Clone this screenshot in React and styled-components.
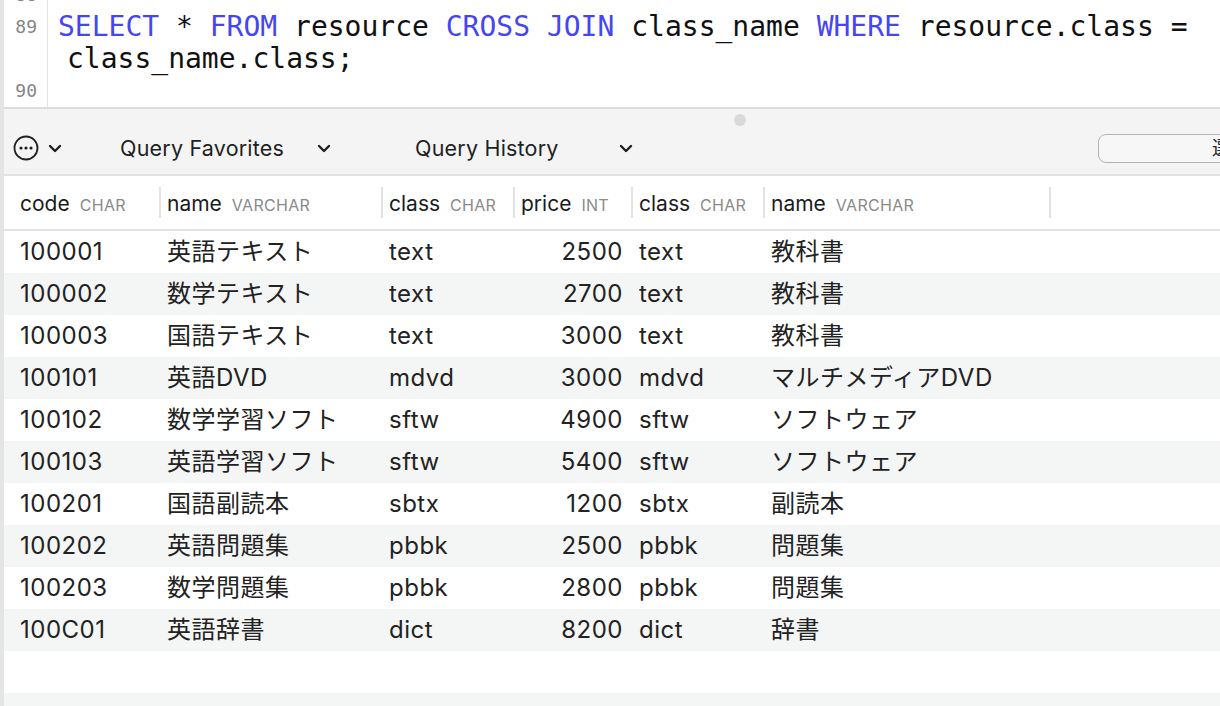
import React from 'react'
import styled, { createGlobalStyle } from 'styled-components'

const GlobalStyle = createGlobalStyle`
  html, body {
    margin: 0;
    padding: 0;
    background: #ffffff;
    overflow: hidden;
  }
  body {
    font-family: Inter, "Noto Sans CJK JP", sans-serif;
    color: #262626;
  }
`

const KEYWORDS = ['SELECT', 'FROM', 'CROSS', 'JOIN', 'WHERE']

const lines = [
  { no: 88, text: '' },
  { no: 89, text: 'SELECT * FROM resource CROSS JOIN class_name WHERE resource.class = class_name.class;' },
  { no: 90, text: '' },
]

const columns = [
  { name: 'code', type: 'CHAR', width: 156, first: true },
  { name: 'name', type: 'VARCHAR', width: 222 },
  { name: 'class', type: 'CHAR', width: 132 },
  { name: 'price', type: 'INT', width: 118, right: true },
  { name: 'class', type: 'CHAR', width: 132 },
  { name: 'name', type: 'VARCHAR', width: 286 },
]

const rows = [
  ['100001', '英語テキスト', 'text', '2500', 'text', '教科書'],
  ['100002', '数学テキスト', 'text', '2700', 'text', '教科書'],
  ['100003', '国語テキスト', 'text', '3000', 'text', '教科書'],
  ['100101', '英語DVD', 'mdvd', '3000', 'mdvd', 'マルチメディアDVD'],
  ['100102', '数学学習ソフト', 'sftw', '4900', 'sftw', 'ソフトウェア'],
  ['100103', '英語学習ソフト', 'sftw', '5400', 'sftw', 'ソフトウェア'],
  ['100201', '国語副読本', 'sbtx', '1200', 'sbtx', '副読本'],
  ['100202', '英語問題集', 'pbbk', '2500', 'pbbk', '問題集'],
  ['100203', '数学問題集', 'pbbk', '2800', 'pbbk', '問題集'],
  ['100C01', '英語辞書', 'dict', '8200', 'dict', '辞書'],
  null,
  null,
]

const gridColumns = columns.map((c) => `${c.width}px`).join(' ') + ' 1fr'

const Chevron = () => (
  <svg width="14" height="9" viewBox="0 0 14 9" fill="none">
    <path d="M2 2 L7 7 L12 2" stroke="#1f1f1f" strokeWidth="2.4" strokeLinecap="round" strokeLinejoin="round" />
  </svg>
)

const MoreIcon = () => (
  <svg width="26" height="26" viewBox="0 0 26 26" fill="none">
    <circle cx="13" cy="13" r="11.5" stroke="#1f1f1f" strokeWidth="1.8" />
    <circle cx="8" cy="13" r="1.6" fill="#1f1f1f" />
    <circle cx="13" cy="13" r="1.6" fill="#1f1f1f" />
    <circle cx="18" cy="13" r="1.6" fill="#1f1f1f" />
  </svg>
)

const renderCode = (text) =>
  text.split(/(\s+)/).map((part, i) =>
    KEYWORDS.includes(part) ? <Keyword key={i}>{part}</Keyword> : part
  )

const App = () => (
  <Shell>
    <GlobalStyle />
    <Editor>
      <Lines>
        {lines.map((line) => (
          <Line key={line.no}>
            <Gutter>{line.no}</Gutter>
            <Code>{line.text ? renderCode(line.text) : '\u00a0'}</Code>
          </Line>
        ))}
      </Lines>
    </Editor>

    <Toolbar>
      <Handle>
        <Dot />
      </Handle>
      <Bar>
        <IconMenu>
          <MoreIcon />
          <Chevron />
        </IconMenu>
        <Dropdown $width={211} $offset={58}>
          Query Favorites
          <Chevron />
        </Dropdown>
        <Dropdown $width={218} $offset={84}>
          Query History
          <Chevron />
        </Dropdown>
        <Search>選択範囲</Search>
      </Bar>
    </Toolbar>

    <Table>
      <HeaderRow>
        {columns.map((col, i) => (
          <HeaderCell key={i} $first={col.first}>
            {col.name}
            <TypeTag>{col.type}</TypeTag>
          </HeaderCell>
        ))}
        <HeaderCell $last />
      </HeaderRow>
      {rows.map((row, r) => (
        <Row key={r} $striped={r % 2 === 1}>
          {columns.map((col, c) => (
            <Cell key={c} $first={col.first} $right={col.right}>
              {row ? row[c] : ''}
            </Cell>
          ))}
          <Cell />
        </Row>
      ))}
    </Table>
  </Shell>
)

export default App

// ------- STYLES -------

const Shell = styled.div`
  width: 1220px;
  height: 706px;
  box-sizing: border-box;
  border-left: 4px solid #e4e4e4;
  overflow: hidden;
  display: flex;
  flex-direction: column;
`

// --- Editor
const Editor = styled.div`
  height: 107px;
  flex-shrink: 0;
  overflow: hidden;
  background: #ffffff;
  border-bottom: 2px solid #dcdcdc;
`

const Lines = styled.div`
  margin-top: -21px;
`

const Line = styled.div`
  display: flex;
  align-items: stretch;
`

const Gutter = styled.div`
  width: 33px;
  flex-shrink: 0;
  padding-right: 10px;
  border-right: 1px solid #e2e2e2;
  text-align: right;
  font-family: "DejaVu Sans Mono", monospace;
  font-size: 18px;
  line-height: 32px;
  color: #858585;
`

const Code = styled.div`
  flex: 1;
  padding-left: 19px;
  padding-right: 20px;
  text-indent: -9px;
  font-family: "DejaVu Sans Mono", monospace;
  font-size: 28px;
  line-height: 32px;
  color: #111111;
  white-space: pre-wrap;
`

const Keyword = styled.span`
  color: #4646f0;
`

// --- Toolbar
const Toolbar = styled.div`
  height: 65px;
  flex-shrink: 0;
  background: #f4f4f4;
  border-bottom: 2px solid #e2e2e2;
  display: flex;
  flex-direction: column;
`

const Handle = styled.div`
  height: 17px;
  display: flex;
  justify-content: center;
  align-items: flex-end;
`

const Dot = styled.div`
  width: 12px;
  height: 12px;
  border-radius: 50%;
  background: #d9d9d9;
  margin-left: 256px;
`

const Bar = styled.div`
  flex: 1;
  display: flex;
  align-items: center;
  padding-left: 9px;
  padding-bottom: 4px;
  white-space: nowrap;
`

const IconMenu = styled.div`
  display: flex;
  align-items: center;
  gap: 9px;
`

const Dropdown = styled.div`
  width: ${(p) => p.$width}px;
  margin-left: ${(p) => p.$offset}px;
  flex-shrink: 0;
  display: flex;
  align-items: center;
  justify-content: space-between;
  font-size: 21.5px;
  letter-spacing: 0.2px;
  color: #1f1f1f;
`

const Search = styled.div`
  flex-shrink: 0;
  margin-left: 465px;
  width: 220px;
  height: 29px;
  box-sizing: border-box;
  border: 1.5px solid #b4b4b4;
  border-radius: 8px;
  background: #f7f7f7;
  padding-left: 113px;
  font-size: 19px;
  line-height: 27px;
  color: #222222;
  overflow: hidden;
`

// --- Table
const Table = styled.div`
  flex: 1;
  background: #ffffff;
`

const HeaderRow = styled.div`
  display: grid;
  grid-template-columns: ${gridColumns};
  height: 53px;
  border-bottom: 2px solid #e3e3e3;
`

const HeaderCell = styled.div`
  position: relative;
  display: flex;
  align-items: center;
  gap: 10px;
  padding-left: ${(p) => (p.$first ? 16 : 7)}px;
  padding-top: 2px;
  font-size: 21px;
  color: #1c1c1c;
  white-space: nowrap;

  &::after {
    content: '';
    display: ${(p) => (p.$last ? 'none' : 'block')};
    position: absolute;
    right: -1px;
    top: 11px;
    bottom: 11px;
    width: 2px;
    background: #e3e3e3;
  }
`

const TypeTag = styled.span`
  font-size: 16px;
  letter-spacing: 0.3px;
  color: #8a8a8a;
  padding-top: 2px;
`

const Row = styled.div`
  display: grid;
  grid-template-columns: ${gridColumns};
  height: 42px;
  background: ${(p) => (p.$striped ? '#f4f5f5' : '#ffffff')};
`

const Cell = styled.div`
  padding-left: ${(p) => (p.$first ? 16 : 7)}px;
  padding-right: ${(p) => (p.$right ? 9 : 0)}px;
  text-align: ${(p) => (p.$right ? 'right' : 'left')};
  font-size: 24px;
  letter-spacing: 0.5px;
  line-height: 42px;
  color: #222222;
  white-space: nowrap;
  overflow: hidden;
`
